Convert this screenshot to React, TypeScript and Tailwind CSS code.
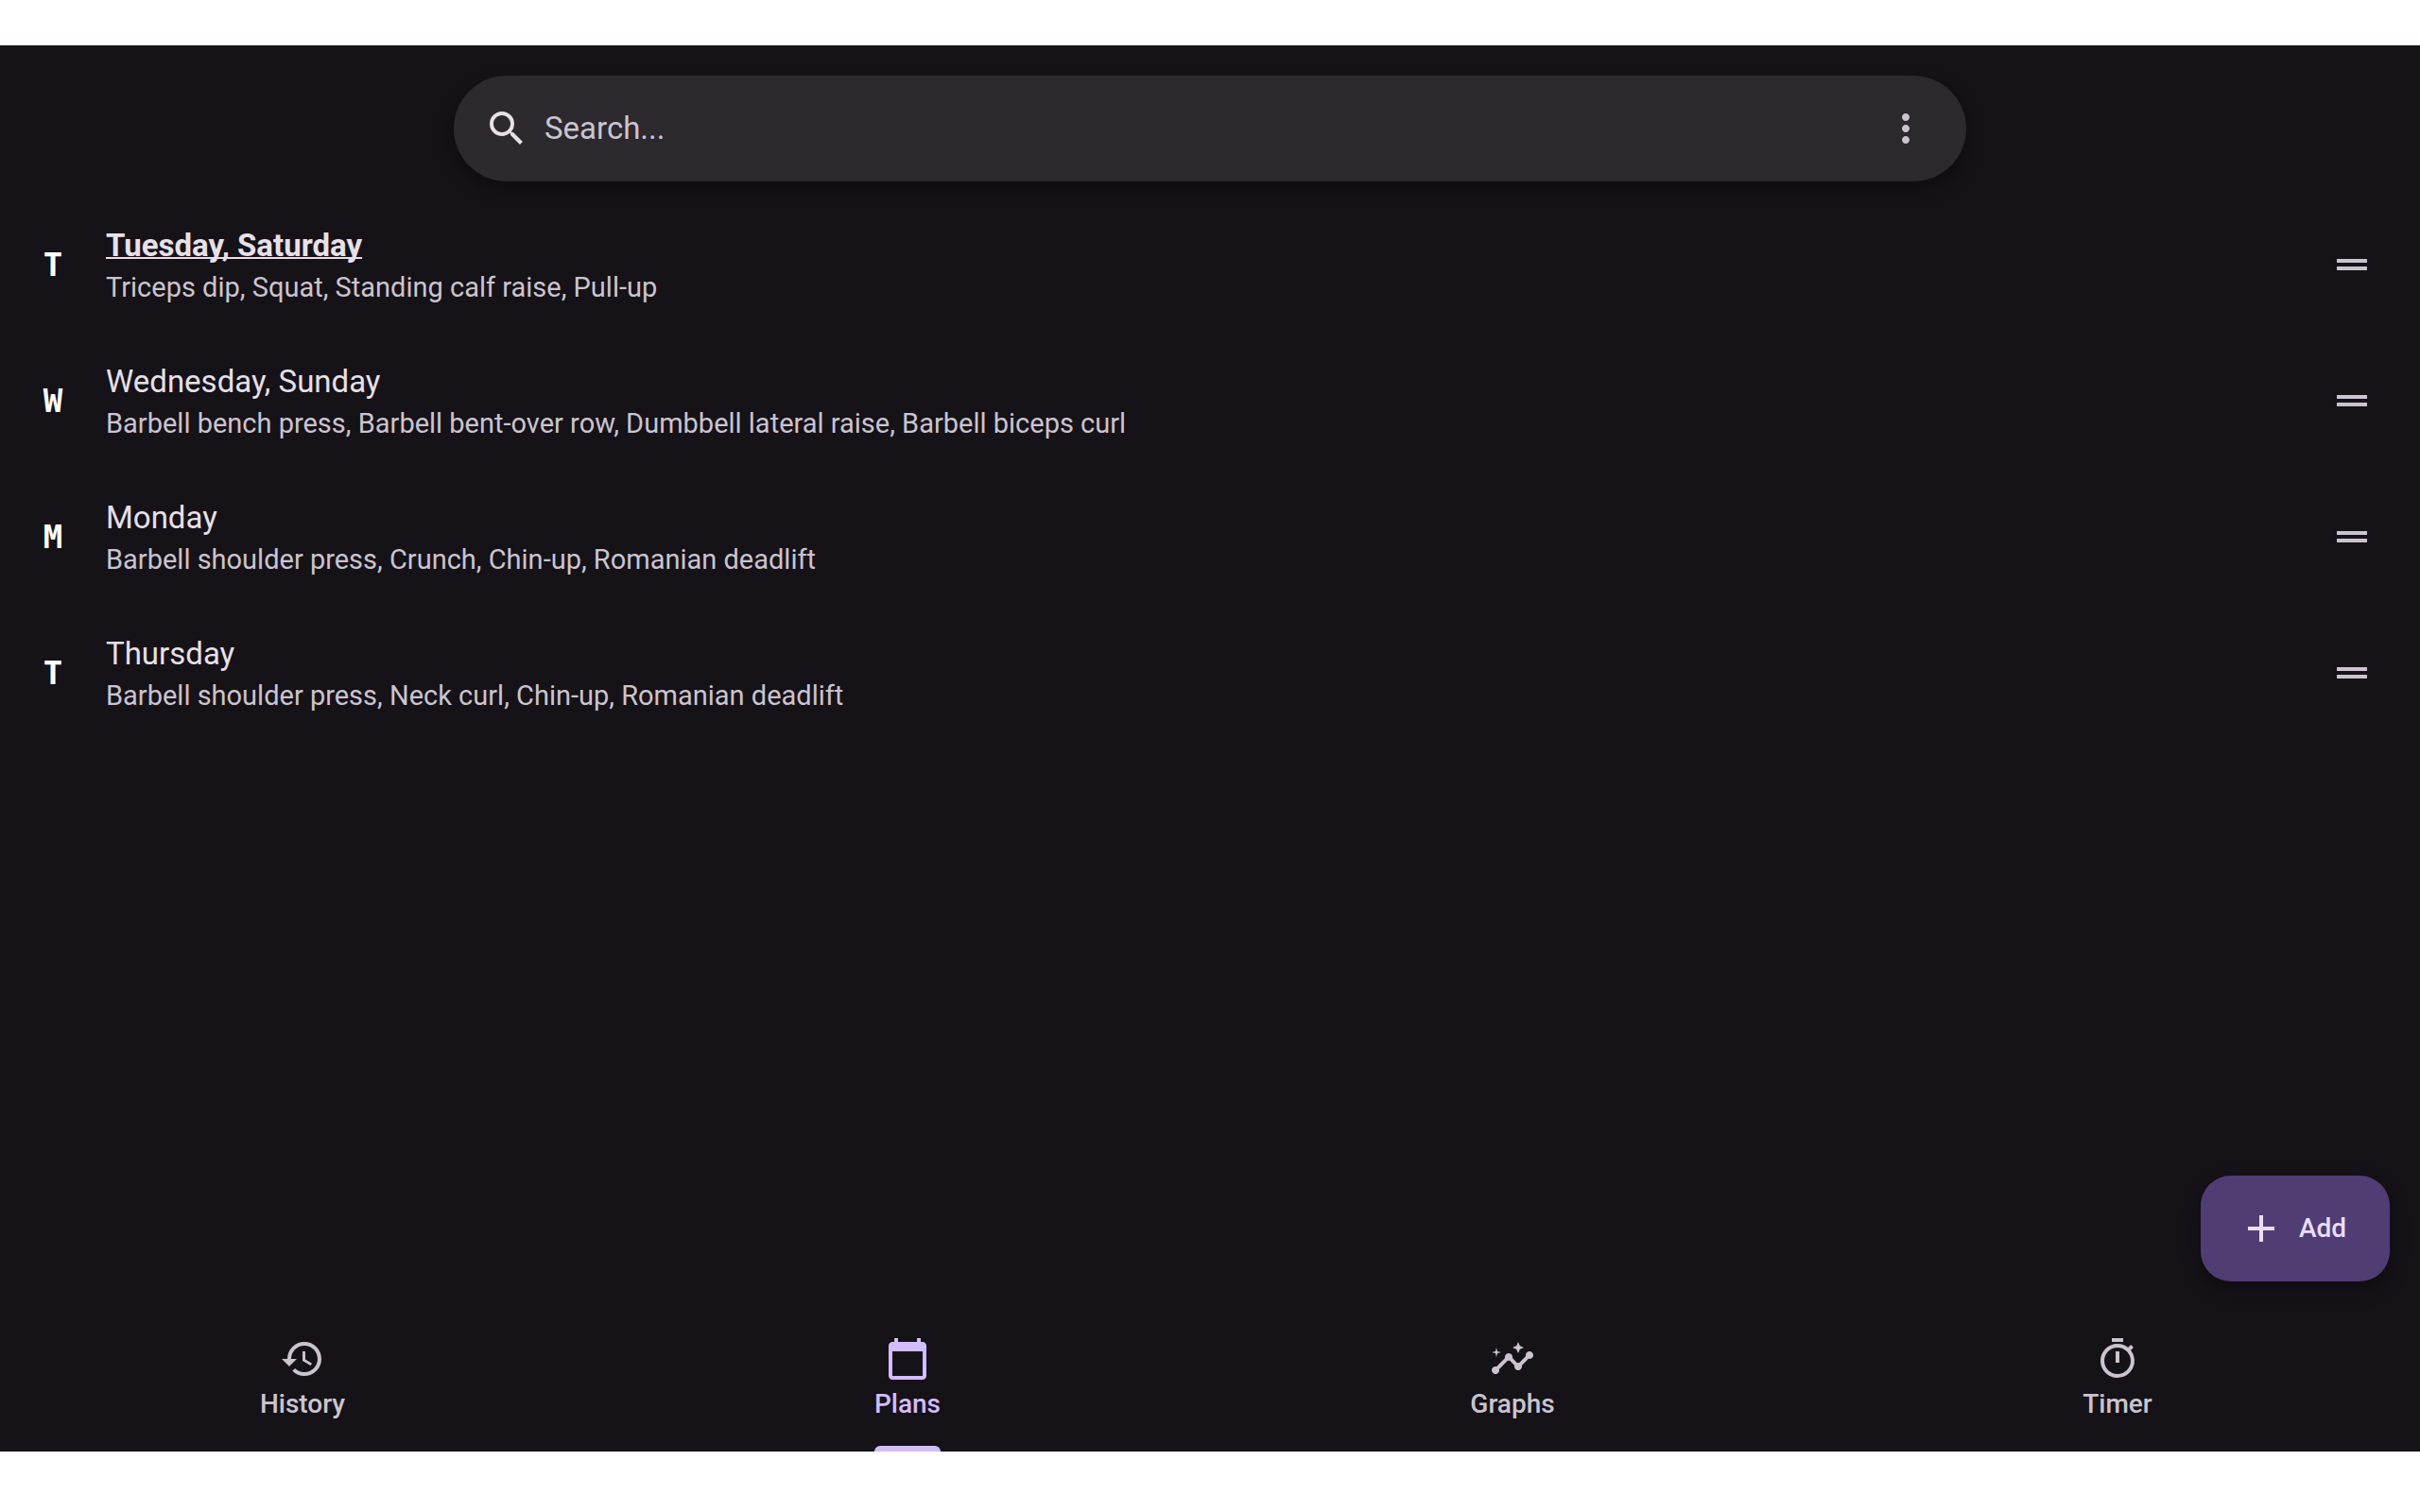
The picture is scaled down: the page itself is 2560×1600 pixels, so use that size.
import React from "react";
import {
  MdAdd,
  MdCalendarToday,
  MdDragHandle,
  MdHistory,
  MdInsights,
  MdMoreVert,
  MdOutlineTimer,
  MdSearch,
} from "react-icons/md";

type Plan = { days: string; exercises: string; today?: boolean };

const plans: Plan[] = [
  {
    days: "Tuesday, Saturday",
    exercises: "Triceps dip, Squat, Standing calf raise, Pull-up",
    today: true,
  },
  {
    days: "Wednesday, Sunday",
    exercises:
      "Barbell bench press, Barbell bent-over row, Dumbbell lateral raise, Barbell biceps curl",
  },
  {
    days: "Monday",
    exercises: "Barbell shoulder press, Crunch, Chin-up, Romanian deadlift",
  },
  {
    days: "Thursday",
    exercises: "Barbell shoulder press, Neck curl, Chin-up, Romanian deadlift",
  },
];

const tabs = [
  { label: "History", Icon: MdHistory },
  { label: "Plans", Icon: MdCalendarToday, active: true },
  { label: "Graphs", Icon: MdInsights },
  { label: "Timer", Icon: MdOutlineTimer },
];

function SearchBar() {
  return (
    <div className="mx-auto flex h-28 w-full max-w-[1600px] items-center gap-4 rounded-full bg-[#2c292f] pr-10 pl-8 shadow-[0_8px_20px_rgba(0,0,0,0.3)]">
      <MdSearch className="size-12 shrink-0 text-[#e7e0e8]" aria-hidden="true" />
      <input
        type="text"
        aria-label="Search plans"
        placeholder="Search..."
        className="h-12 min-w-0 flex-1 bg-transparent text-[33px] text-[#e7e0e8] outline-none placeholder:text-[#cbc4cf]"
      />
      <button type="button" aria-label="More options" className="text-[#cbc4cf]">
        <MdMoreVert className="size-12" />
      </button>
    </div>
  );
}

function PlanRow({ plan }: { plan: Plan }) {
  return (
    <li className="flex h-36 items-center px-12">
      <button type="button" className="flex min-w-0 flex-1 items-center gap-12 text-left">
        <span
          aria-hidden="true"
          className="flex w-4 shrink-0 justify-center font-['DejaVu_Sans_Mono',monospace] text-[34px] leading-12 font-bold text-white"
        >
          {plan.days[0]}
        </span>
        <span className="flex min-w-0 flex-col">
          <span
            className={
              plan.today
                ? "text-[33px] leading-12 font-bold text-[#e7e0e8] underline decoration-2 [text-decoration-skip-ink:none]"
                : "text-[33px] leading-12 text-[#e7e0e8]"
            }
          >
            {plan.days}
          </span>
          <span className="text-[29px] leading-10 text-[#cbc4cf]">{plan.exercises}</span>
        </span>
      </button>
      <button type="button" aria-label={`Reorder ${plan.days}`} className="text-[#cbc4cf]">
        <MdDragHandle className="size-12" />
      </button>
    </li>
  );
}

function TabBar() {
  return (
    <nav className="grid h-36 grid-cols-4">
      {tabs.map(({ label, Icon, active }) => (
        <button
          key={label}
          type="button"
          aria-current={active ? "page" : undefined}
          className={
            active
              ? "flex flex-col items-center justify-end text-[#d3bcfd]"
              : "flex flex-col items-center justify-end text-[#cbc4cf]"
          }
        >
          <Icon className="mb-1 size-12" aria-hidden="true" />
          <span className="flex flex-col text-[28px] leading-10 font-medium">
            {label}
            <span
              className={
                active ? "mt-6 h-1.5 rounded-t-md bg-[#d3bcfd]" : "mt-6 h-1.5 bg-transparent"
              }
            />
          </span>
        </button>
      ))}
    </nav>
  );
}

export default function App() {
  return (
    <div className="flex min-h-screen flex-col bg-white pt-12 pb-16 font-['Roboto',sans-serif]">
      <div className="relative flex flex-1 flex-col bg-[#151218]">
        <header className="px-8 pt-8 pb-4">
          <SearchBar />
        </header>
        <main className="flex-1">
          <ul>
            {plans.map((plan) => (
              <PlanRow key={plan.days} plan={plan} />
            ))}
          </ul>
        </main>
        <button
          type="button"
          className="absolute right-8 bottom-45 flex h-28 min-w-[200px] items-center gap-4 rounded-[32px] bg-[#4f3d74] px-10 text-[28px] font-medium text-[#ebddff] shadow-[0_8px_20px_rgba(0,0,0,0.3)]"
        >
          <MdAdd className="size-12" aria-hidden="true" />
          Add
        </button>
        <TabBar />
      </div>
    </div>
  );
}
